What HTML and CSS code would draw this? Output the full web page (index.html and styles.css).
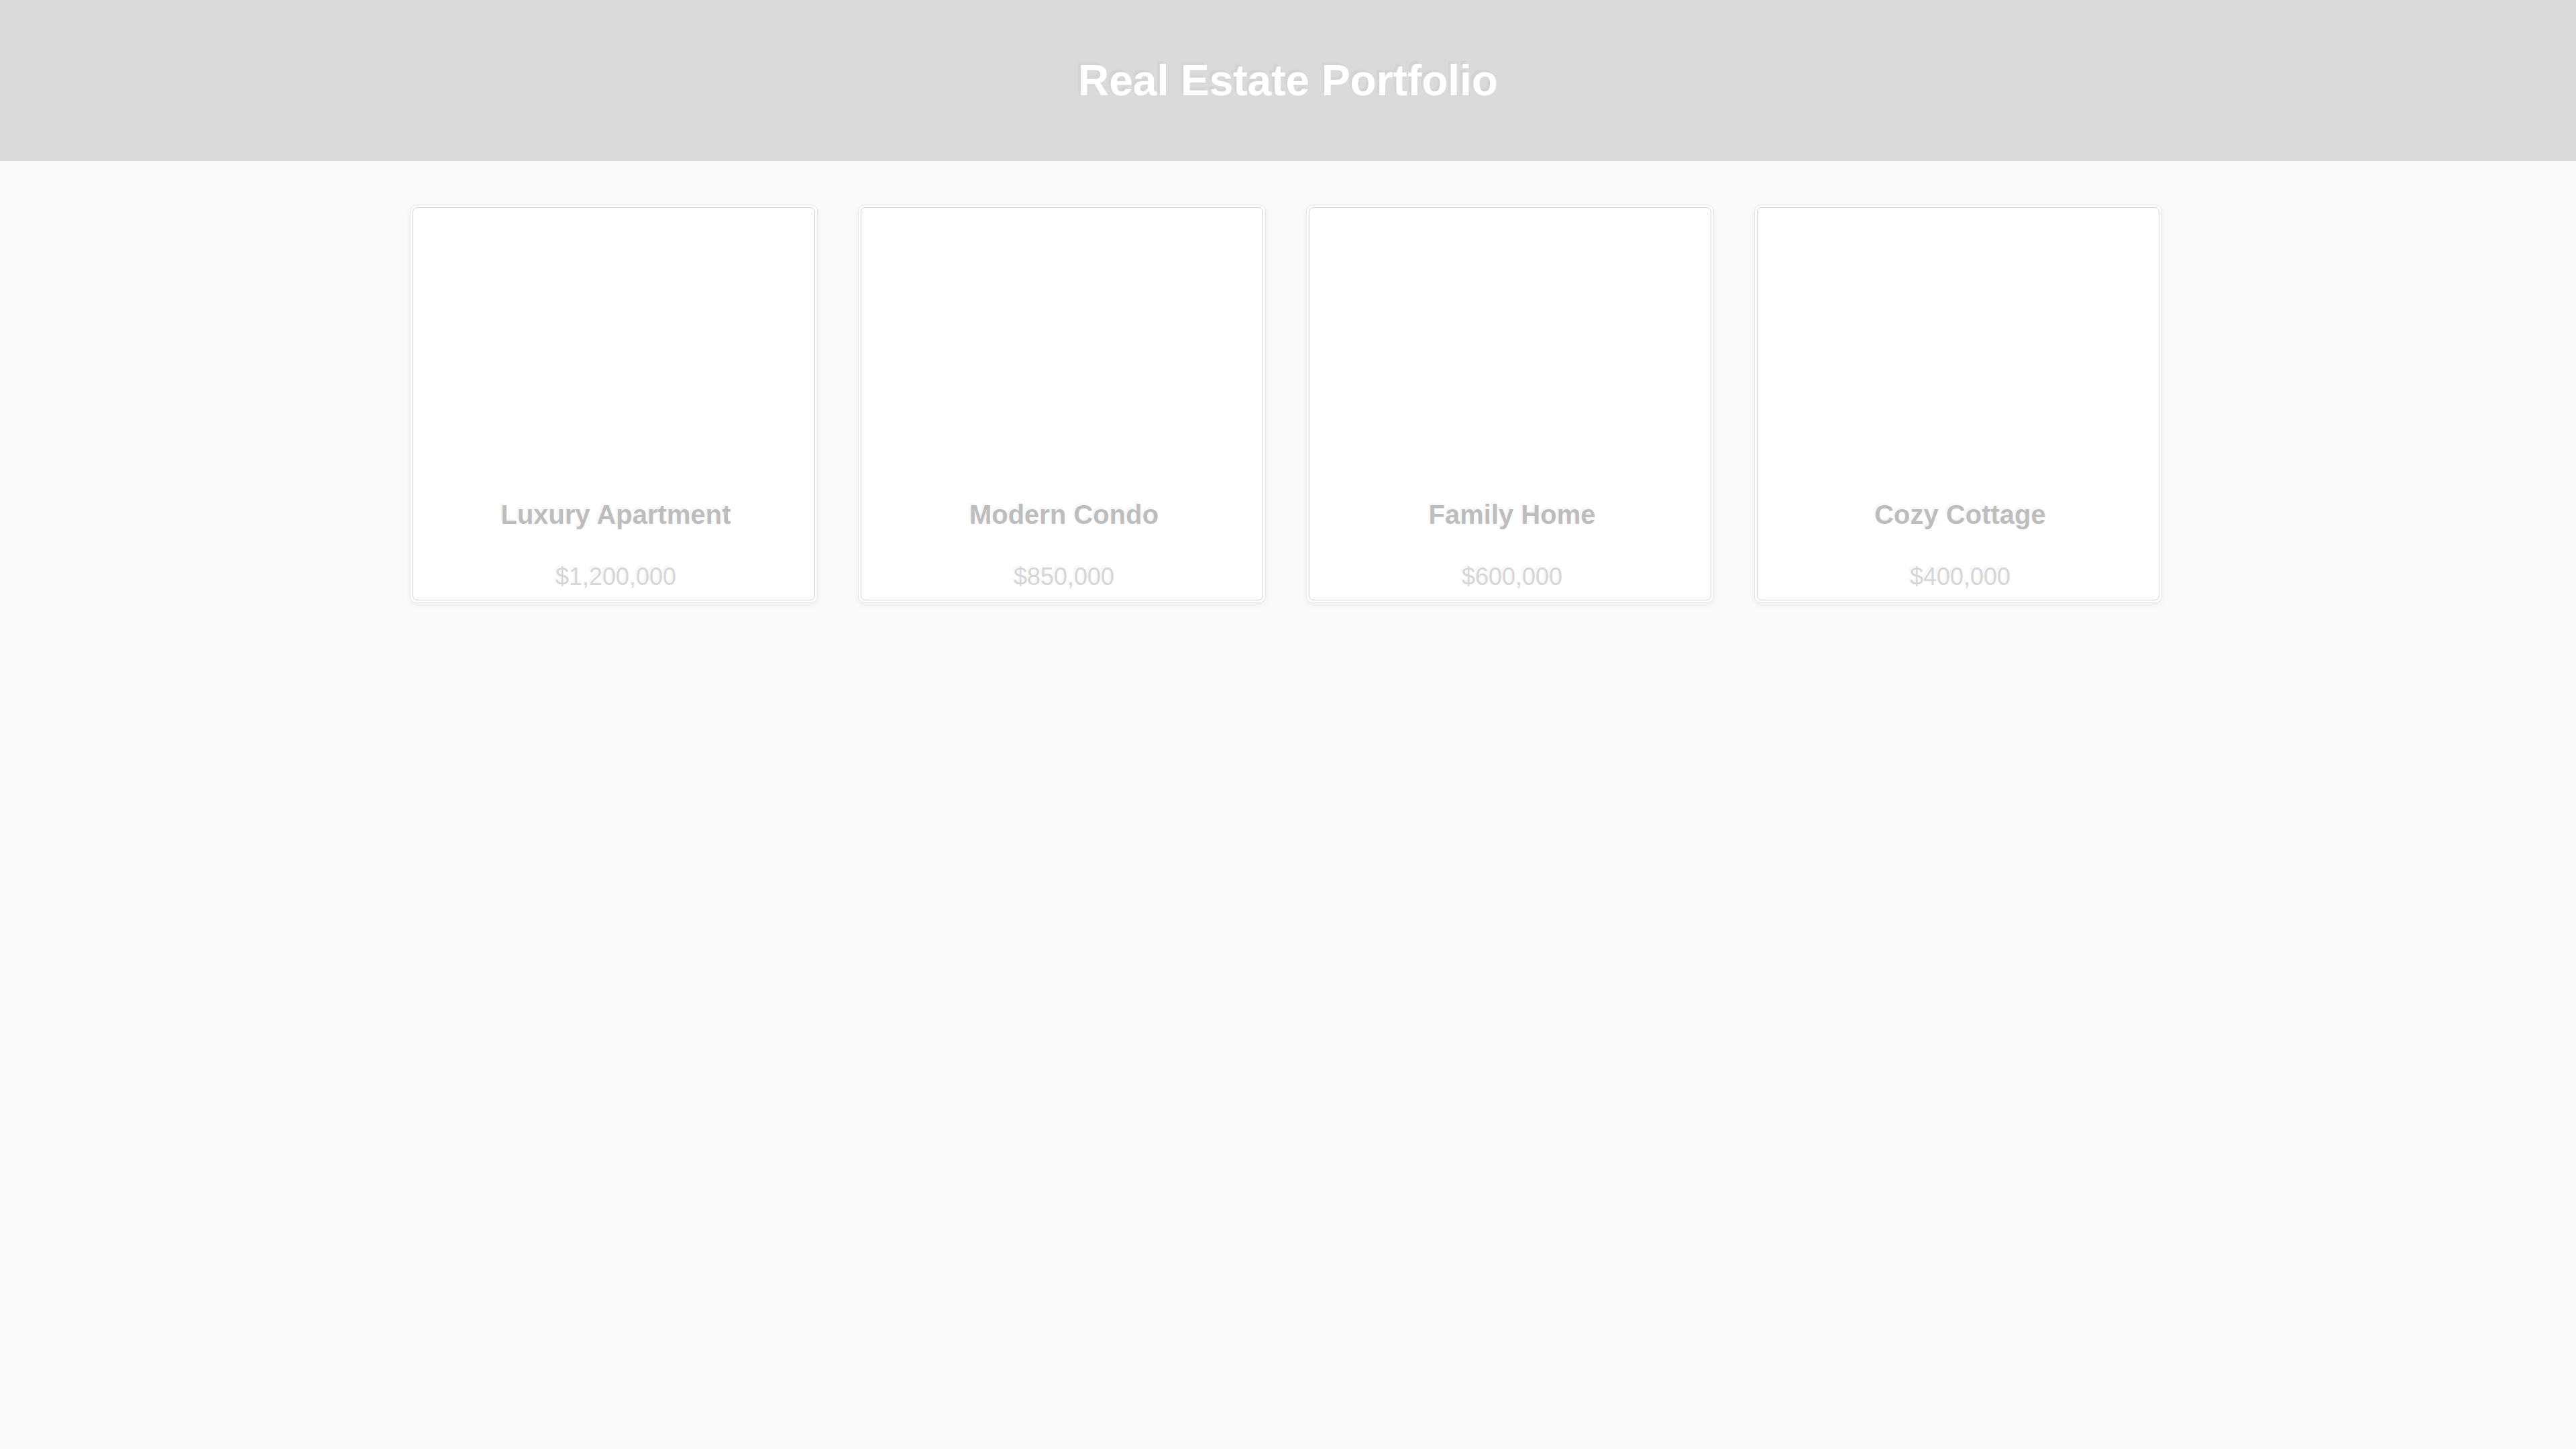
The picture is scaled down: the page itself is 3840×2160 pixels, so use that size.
FILE: index.html
```html
<!DOCTYPE html>
<html lang="en">
<head>
<meta charset="utf-8">
<title>Real Estate Portfolio</title>
<link rel="stylesheet" href="styles.css">
</head>
<body>
<header class="site-header">
  <h1 class="site-title">Real Estate Portfolio</h1>
</header>
<main class="portfolio">
  <div class="grid">
    <article class="card">
      <div class="card-inner">
        <div class="photo"></div>
        <div class="info">
          <h3 class="name">Luxury Apartment</h3>
          <p class="price">$1,200,000</p>
        </div>
      </div>
    </article>
    <article class="card">
      <div class="card-inner">
        <div class="photo"></div>
        <div class="info">
          <h3 class="name">Modern Condo</h3>
          <p class="price">$850,000</p>
        </div>
      </div>
    </article>
    <article class="card">
      <div class="card-inner">
        <div class="photo"></div>
        <div class="info">
          <h3 class="name">Family Home</h3>
          <p class="price">$600,000</p>
        </div>
      </div>
    </article>
    <article class="card">
      <div class="card-inner">
        <div class="photo"></div>
        <div class="info">
          <h3 class="name">Cozy Cottage</h3>
          <p class="price">$400,000</p>
        </div>
      </div>
    </article>
  </div>
</main>
</body>
</html>
```
FILE: styles.css
```css
* { box-sizing: border-box; }

html, body {
  margin: 0;
  padding: 0;
}

body {
  background: #fafafa;
  font-family: "Liberation Sans", Arial, sans-serif;
  min-height: 2160px;
}

.site-header {
  height: 240px;
  background: #dadada;
  display: flex;
  align-items: center;
  justify-content: center;
}

.site-title {
  margin: 0;
  font-size: 64px;
  font-weight: bold;
  color: #ffffff;
  line-height: normal;
  text-shadow: -4px -4px 1px rgba(0, 0, 0, 0.03);
}

.portfolio {
  padding-top: 65px;
}

.grid {
  width: 2618px;
  margin: 0 auto;
  display: grid;
  grid-template-columns: repeat(4, 608px);
  gap: 60px;
}

.card {
  background: #ffffff;
  border: 1px solid #e6e6e6;
  border-radius: 10px;
  padding: 3px;
  box-shadow: 0 3px 8px rgba(0, 0, 0, 0.05);
}

.card-inner {
  border: 1px solid #cfcfcf;
  border-radius: 7px;
  background: #ffffff;
}

.photo {
  height: 400px;
}

.info {
  padding: 34px 18px 13px 24px;
  text-align: center;
}

.name {
  margin: 0 0 49px;
  font-size: 40px;
  line-height: 46px;
  font-weight: bold;
  color: #bdbdbd;
  text-shadow: -3px -3px 1px rgba(0, 0, 0, 0.03);
}

.price {
  margin: 0;
  font-size: 36px;
  line-height: 42px;
  color: #d6d6d6;
  text-shadow: -3px -3px 1px rgba(0, 0, 0, 0.03);
}
```
